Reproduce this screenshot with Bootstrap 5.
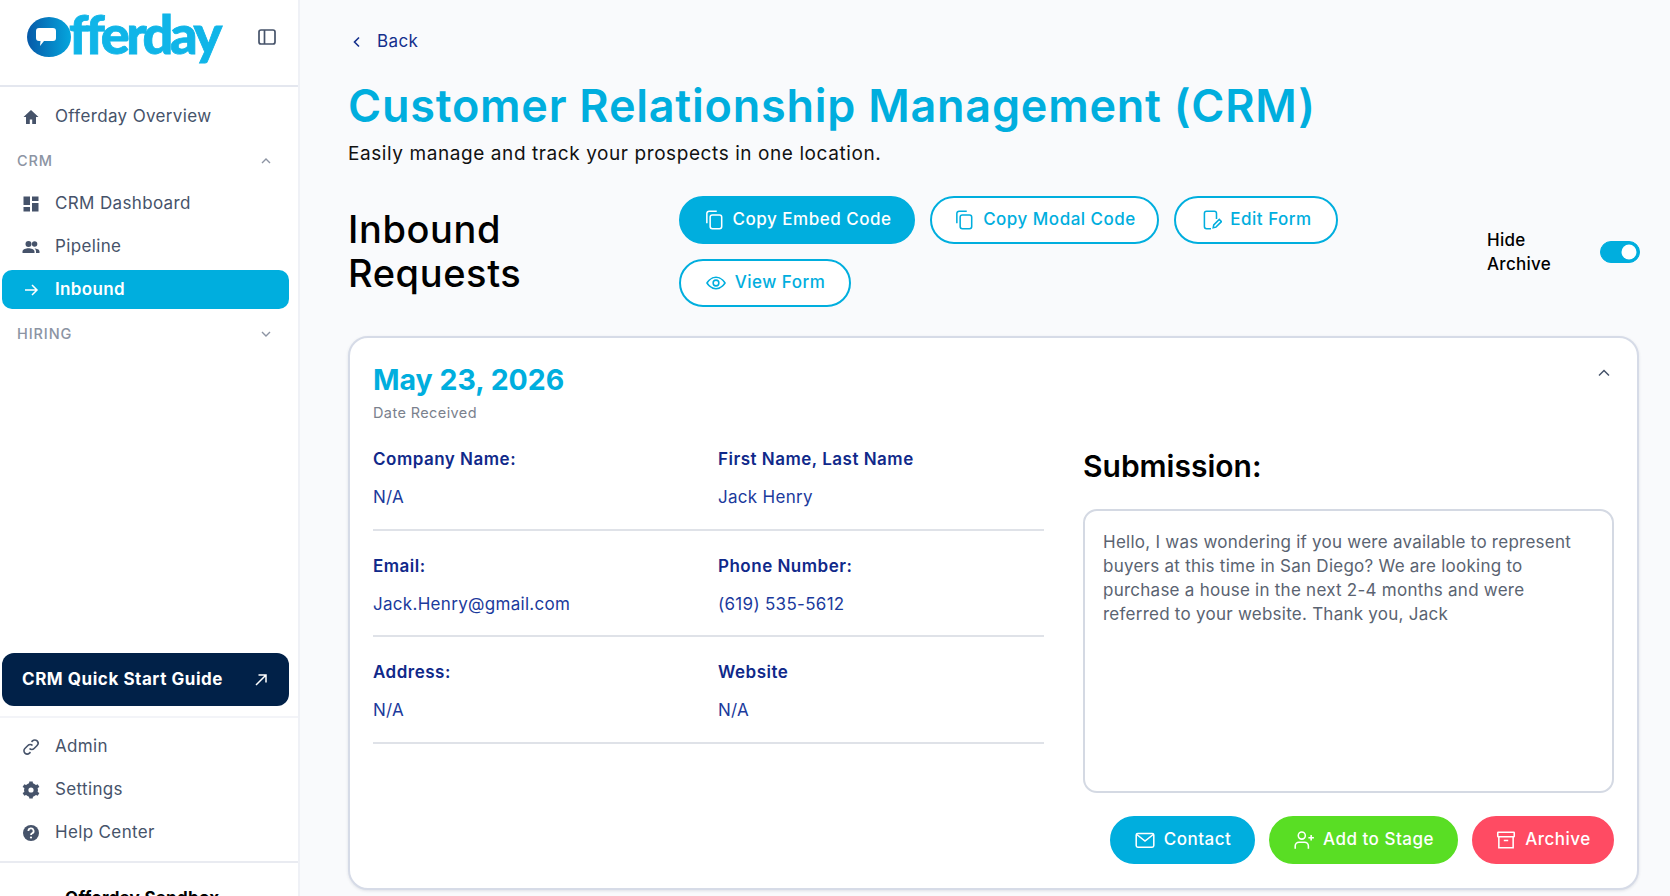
<!DOCTYPE html>
<html lang="en">
<head>
  <meta charset="UTF-8">
  <meta name="viewport" content="width=device-width, initial-scale=1.0">
  <title>Offerday CRM - Inbound</title>
  <link href="https://cdn.jsdelivr.net/npm/bootstrap@5.3.0/dist/css/bootstrap.min.css" rel="stylesheet">
  <style>
    html, body { height: 896px; overflow: hidden; }
    body { background: #f9fafc; font-family: Inter, "Open Sans", sans-serif; color: #000; }
    .shell { height: 896px; }
    .side { width: 300px; flex: none; background: #fff; border-right: 2px solid #eff1f6; }
    .side-top { height: 87px; border-bottom: 2px solid #e4e7ef; padding: 0 21px 11px 27px; }
    .brand { font-family: Lato, sans-serif; font-weight: 900; font-size: 54px; line-height: 1; letter-spacing: -3.4px; color: #10b5e8; -webkit-text-stroke: .8px #10b5e8; margin-left: -2px; position: relative; top: -3px; }
    .side-link { display: flex; align-items: center; height: 39px; margin: 0 9px 0 2px; padding-left: 19px; gap: 14px; color: #46536a; font-size: 17px; letter-spacing: .35px; text-decoration: none; border-radius: 10px; }
    .side-link svg { width: 20px; height: 20px; flex: none; }
    .side-link.on { background: #00aede; color: #fff; font-weight: 600; }
    .side-group { display: flex; align-items: center; justify-content: space-between; height: 20px; padding: 0 26px 0 17px; color: #8c94a3; font-size: 14.5px; font-weight: 500; letter-spacing: .9px; }
    .group-crm { margin: 15px 0 13px; }
    .group-hiring { margin-top: 15px; }
    .guide { display: flex; align-items: center; justify-content: space-between; height: 53px; margin: 0 9px 0 2px; padding: 0 20px; background: #012148; color: #fff; font-weight: 700; font-size: 17px; letter-spacing: .55px; border-radius: 12px; text-decoration: none; }
    .rule-soft { border-top: 2px solid #f3f4f8; margin-top: 10px; padding-top: 9px; }
    .rule-hard { border-top: 2px solid #e9ebf1; margin-top: 9px; height: 35px; padding: 23px 0 0 65px; font-weight: 700; font-size: 17px; letter-spacing: .3px; white-space: nowrap; }
    .main-area { padding: 0 31px 0 48px; min-width: 0; }
    .back-link { display: flex; align-items: center; gap: 15px; margin: 31px 0 0 4px; height: 22px; color: #142f8c; font-size: 17px; letter-spacing: .4px; text-decoration: none; }
    .page-title { color: #00aede; font-size: 45px; font-weight: 600; line-height: 54px; margin: 26px 0 0; letter-spacing: .75px; }
    .page-sub { font-size: 19px; line-height: 26px; margin: 8px 0 0; color: #111; letter-spacing: .58px; }
    .head-row { margin-top: 29px; height: 140px; }
    .head-title { width: 331px; flex: none; font-size: 38px; line-height: 44px; font-weight: 500; margin: 11px 0 0; letter-spacing: .6px; }
    .head-btns { width: 680px; flex: none; column-gap: 15px; row-gap: 15px; }
    .pill { display: inline-flex; align-items: center; justify-content: center; gap: 8px; height: 48px; padding: 0; border-radius: 24px; font-size: 17px; font-weight: 500; letter-spacing: .5px; border: 2px solid #00aede; }
    .pill svg { width: 22px; height: 22px; flex: none; }
    .pill-fill { background: #00aede; color: #fff; }
    .pill-line { background: #fff; color: #00aede; }
    .pill-go { background: #59de24; border-color: #59de24; color: #fff; }
    .pill-stop { background: #ff4b63; border-color: #ff4b63; color: #fff; }
    .pill-row { gap: 14px; margin-top: 23px; }
    .hide-box { margin-left: auto; width: 152px; padding-top: 32px; }
    .hide-text { font-size: 17px; font-weight: 500; line-height: 24px; width: 113px; flex: none; letter-spacing: .3px; }
    .hide-switch { min-height: 0; margin-top: 13px; }
    .hide-box .form-check-input { width: 40px; height: 22px; margin: 0; background-color: #00aede; border-color: #00aede; }
    .req-card { border: 2px solid #d6dbe7; border-radius: 20px; background: #fff; height: 554px; padding: 26px 24px 0 23px; box-shadow: 0 1px 3px rgba(40,50,80,.12); }
    .req-date { color: #00aede; font-size: 28.5px; line-height: 36px; font-weight: 700; margin: -2px 0 0; }
    .req-sub { color: #7a818d; font-size: 14.5px; line-height: 20px; margin: 5px 0 0; letter-spacing: .4px; }
    .fields { width: 671px; flex: none; padding-top: 1px; }
    .field-row { border-bottom: 2px solid #dfe2e8; height: 106.5px; }
    .field-name { color: #10298a; font-weight: 600; font-size: 17px; line-height: 24px; letter-spacing: .5px; }
    .field-val { color: #1b3a9c; font-size: 17px; line-height: 24px; margin-top: 14px; letter-spacing: .3px; }
    .field-cell { width: 345px; flex: none; padding-top: 23px; }
    .sub-col { width: 531px; margin-left: 39px; flex: none; margin-top: 25px; }
    .sub-title { font-size: 30px; line-height: 36px; font-weight: 600; margin: 0 0 25px; }
    .sub-text { height: 284px; border: 2px solid #d4d9e3; border-radius: 14px; padding: 19px 18px; color: #5a6371; font-size: 17px; line-height: 24px; letter-spacing: .25px; }
    .caret { position: absolute; right: 26px; top: 30px; }
  </style>
</head>
<body>
  <div class="d-flex shell">
    <aside class="side d-flex flex-column">
      <div class="side-top d-flex align-items-center justify-content-between">
        <div class="d-flex align-items-center">
          <svg width="44" height="40" viewBox="0 0 44 40">
            <defs><linearGradient id="lg" x1="0" x2="1" y1="0" y2="0"><stop offset="0" stop-color="#0659a8"/><stop offset="1" stop-color="#05a6dd"/></linearGradient></defs>
            <ellipse cx="22" cy="20" rx="22" ry="20" fill="url(#lg)"/>
            <path d="M12 11h14a3 3 0 0 1 3 3v7a3 3 0 0 1-3 3H17l-4 5 .5-5H12a3 3 0 0 1-3-3v-7a3 3 0 0 1 3-3z" fill="#fff"/>
          </svg>
          <span class="brand">fferday</span>
        </div>
        <svg width="20" height="20" viewBox="0 0 20 20" fill="none" stroke="#46536a" stroke-width="1.7"><rect x="2" y="3" width="16" height="14" rx="2"/><path d="M7.5 3v14"/></svg>
      </div>
      <div style="padding-top:10px">
        <a class="side-link" href="#"><svg viewBox="0 0 20 20" fill="#46536a"><path d="M10 3 2.5 10H5v7h3.8v-4.5h2.4V17H15v-7h2.5z"/></svg>Offerday Overview</a>
      </div>
      <div class="side-group group-crm"><span>CRM</span><svg width="12" height="12" viewBox="0 0 12 12" fill="none" stroke="#8c94a3" stroke-width="1.4"><path d="m2 8 4-4 4 4"/></svg></div>
      <a class="side-link" href="#"><svg viewBox="0 0 20 20" fill="#46536a"><path d="M2.500 2.500h6.500v8.500H2.500zM11 2.500h6.500v4.500H11zM11 9h6.500v8.500H11zM2.500 13H9v4.500H2.500z"/></svg>CRM Dashboard</a>
      <a class="side-link mt-1" href="#"><svg viewBox="0 0 20 20" fill="#46536a"><circle cx="7.5" cy="7" r="3"/><circle cx="13.6" cy="7" r="2.7"/><path d="M1.5 16v-1.6c0-2.2 3.6-3.2 6-3.2s6 1 6 3.2V16zM15 16v-1.8c0-1.2-.6-2.1-1.6-2.8 2.2 0 5.1.9 5.1 2.9V16z"/></svg>Pipeline</a>
      <a class="side-link on mt-1" href="#"><svg viewBox="0 0 20 20" fill="none" stroke="#fff" stroke-width="1.5"><path d="M4 10h12M11 5l5 5-5 5"/></svg>Inbound</a>
      <div class="side-group group-hiring"><span>HIRING</span><svg width="12" height="12" viewBox="0 0 12 12" fill="none" stroke="#8c94a3" stroke-width="1.4"><path d="m2 4 4 4 4-4"/></svg></div>
      <div class="mt-auto">
        <a class="guide" href="#">CRM Quick Start Guide<svg width="16" height="16" viewBox="0 0 16 16" fill="none" stroke="#fff" stroke-width="1.5"><path d="M3 13 13 3M5.5 3H13v7.5"/></svg></a>
        <div class="rule-soft">
          <a class="side-link" href="#"><svg viewBox="0 0 20 20" fill="none" stroke="#46536a" stroke-width="1.6"><path d="M8.5 11.500a3.200 3.200 0 0 0 4.600 0l3-3a3.200 3.200 0 0 0-4.600-4.600l-1 1M11.500 8.500a3.200 3.200 0 0 0-4.600 0l-3 3a3.200 3.200 0 0 0 4.600 4.600l1-1"/></svg>Admin</a>
          <a class="side-link mt-1" href="#"><svg viewBox="0 0 20 20"><circle cx="10" cy="10" r="4.800" fill="none" stroke="#46536a" stroke-width="4.400"/><path d="M8.300 1.500h3.400l.4 3H7.900zM8.300 18.500h3.400l.4-3H7.900zM1.600 7.100l1.700-2.900 2.800 1.200-1.900 3zM18.400 12.900l-1.700 2.900-2.800-1.200 1.900-3zM3.300 15.800l-1.700-2.900 2.600-1.300 1.900 3zM16.700 4.200l1.700 2.900-2.600 1.300-1.900-3z" fill="#46536a"/></svg>Settings</a>
          <a class="side-link mt-1" href="#"><svg viewBox="0 0 20 20"><circle cx="10" cy="10" r="8" fill="#46536a"/><path d="M7.400 8a2.600 2.600 0 1 1 3.800 2.300c-.8.500-1.200.9-1.200 1.700" fill="none" stroke="#fff" stroke-width="1.800"/><circle cx="10" cy="14.500" r="1.100" fill="#fff"/></svg>Help Center</a>
        </div>
        <div class="rule-hard">Offerday Sandbox</div>
      </div>
    </aside>
    <main class="main-area flex-grow-1">
      <a class="back-link" href="#"><svg width="10" height="12" viewBox="0 0 10 12" fill="none" stroke="#142f8c" stroke-width="1.600"><path d="M7 1.500 2.500 6 7 10.500"/></svg>Back</a>
      <h1 class="page-title">Customer Relationship Management (CRM)</h1>
      <p class="page-sub">Easily manage and track your prospects in one location.</p>
      <div class="head-row d-flex">
        <h2 class="head-title">Inbound<br>Requests</h2>
        <div class="head-btns d-flex flex-wrap align-content-start">
          <button class="pill pill-fill" style="width:236px"><svg viewBox="0 0 20 20" fill="none" stroke="#fff" stroke-width="1.400"><rect x="6.500" y="5.500" width="10.500" height="12.500" rx="2"/><path d="M3.500 13V4a2 2 0 0 1 2-2h7"/></svg>Copy Embed Code</button>
          <button class="pill pill-line" style="width:229px"><svg viewBox="0 0 20 20" fill="none" stroke="#00aede" stroke-width="1.400"><rect x="6.500" y="5.500" width="10.500" height="12.500" rx="2"/><path d="M3.500 13V4a2 2 0 0 1 2-2h7"/></svg>Copy Modal Code</button>
          <button class="pill pill-line" style="width:164px"><svg viewBox="0 0 20 20" fill="none" stroke="#00aede" stroke-width="1.400"><path d="M15 9V4a2 2 0 0 0-2-2H6a2 2 0 0 0-2 2v12a2 2 0 0 0 2 2h4"/><path d="m12 17 .5-2.500 5-5 2 2-5 5z"/></svg>Edit Form</button>
          <button class="pill pill-line" style="width:172px"><svg viewBox="0 0 20 20" fill="none" stroke="#00aede" stroke-width="1.400"><path d="M1.800 10S5 4.800 10 4.800 18.200 10 18.200 10 15 15.200 10 15.200 1.800 10 1.800 10z"/><circle cx="10" cy="10" r="2.600"/></svg>View Form</button>
        </div>
        <div class="hide-box d-flex align-items-start">
          <div class="hide-text">Hide<br>Archive</div>
          <div class="form-check form-switch p-0 hide-switch"><input class="form-check-input" type="checkbox" checked></div>
        </div>
      </div>
      <section class="req-card position-relative">
        <svg class="caret" width="14" height="10" viewBox="0 0 14 10" fill="none" stroke="#46536a" stroke-width="1.500"><path d="m2 7.500 5-5 5 5"/></svg>
        <h3 class="req-date">May 23, 2026</h3>
        <p class="req-sub">Date Received</p>
        <div class="d-flex">
          <div class="fields">
            <div class="field-row d-flex">
              <div class="field-cell"><div class="field-name">Company Name:</div><div class="field-val">N/A</div></div>
              <div class="field-cell"><div class="field-name">First Name, Last Name</div><div class="field-val">Jack Henry</div></div>
            </div>
            <div class="field-row d-flex">
              <div class="field-cell"><div class="field-name">Email:</div><div class="field-val">Jack.Henry@gmail.com</div></div>
              <div class="field-cell"><div class="field-name">Phone Number:</div><div class="field-val">(619) 535-5612</div></div>
            </div>
            <div class="field-row d-flex">
              <div class="field-cell"><div class="field-name">Address:</div><div class="field-val">N/A</div></div>
              <div class="field-cell"><div class="field-name">Website</div><div class="field-val">N/A</div></div>
            </div>
          </div>
          <div class="sub-col">
            <h4 class="sub-title">Submission:</h4>
            <div class="sub-text">Hello, I was wondering if you were available to represent buyers at this time in San Diego? We are looking to purchase a house in the next 2-4 months and were referred to your website. Thank you, Jack</div>
            <div class="d-flex justify-content-end pill-row">
              <button class="pill pill-fill" style="width:145px"><svg viewBox="0 0 20 20" fill="none" stroke="#fff" stroke-width="1.400"><rect x="2" y="4" width="16" height="12.500" rx="1.500"/><path d="m2.500 5 7.500 6 7.500-6"/></svg>Contact</button>
              <button class="pill pill-go" style="width:189px"><svg viewBox="0 0 20 20" fill="none" stroke="#fff" stroke-width="1.400"><circle cx="8" cy="6" r="3.200"/><path d="M2 18v-2.500a3.500 3.500 0 0 1 3.500-3.500h5a3.500 3.500 0 0 1 3.500 3.500V18M14 8h5M16.500 5.500v5"/></svg>Add to Stage</button>
              <button class="pill pill-stop" style="width:142px"><svg viewBox="0 0 20 20" fill="none" stroke="#fff" stroke-width="1.400"><rect x="2.500" y="3" width="15" height="4" rx=".5"/><path d="M3.500 7v10h13V7M8 10.500h4"/></svg>Archive</button>
            </div>
          </div>
        </div>
      </section>
    </main>
  </div>
  <script src="https://cdn.jsdelivr.net/npm/bootstrap@5.3.0/dist/js/bootstrap.bundle.min.js"></script>
</body>
</html>
